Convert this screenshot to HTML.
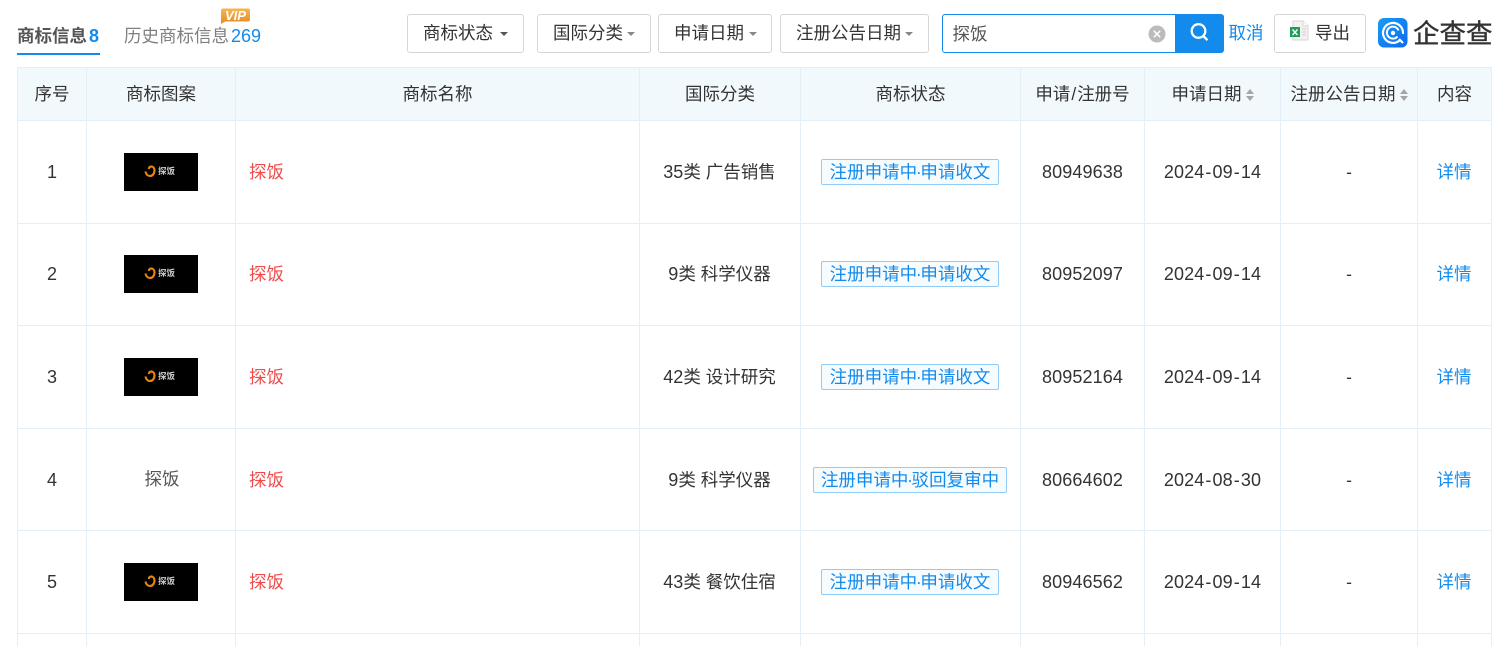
<!DOCTYPE html>
<html lang="zh-CN"><head><meta charset="utf-8"><title>商标信息</title>
<style>
*{box-sizing:border-box}
html,body{margin:0;padding:0;width:1512px;height:646px;overflow:hidden;background:#fff}
body{position:relative;font-family:"Liberation Sans","Noto Sans CJK SC",sans-serif;font-size:17.5px;color:#333}
.a{position:absolute;white-space:nowrap}
.tab{top:23px;line-height:26px;height:26px}
.btn{position:absolute;top:14px;height:39px;border:1px solid #d6d6d6;border-radius:3px;background:#fff;line-height:37px;padding-left:15px;white-space:nowrap}
.caret{position:absolute;top:17px;width:0;height:0;border-left:4px solid transparent;border-right:4px solid transparent;border-top:4px solid #555}
.caret.g{border-top-color:#888}
table{position:absolute;left:17px;top:67px;width:1475px;table-layout:fixed;border-collapse:separate;border-spacing:0}
td,th{padding:0;text-align:center;font-weight:400;line-height:24px;border-right:1px solid #e4eef6;border-bottom:1px solid #e4eef6;vertical-align:middle;white-space:nowrap;overflow:hidden}
tr td:first-child,tr th:first-child{border-left:1px solid #e4eef6}
th{background:#f2f9fc;height:54px;border-top:1px solid #e4eef6}
td.c{padding-right:1px}
.r2 td{padding-bottom:2px}
.name{text-align:left;padding-left:13px;color:#f04b4b}
.tag{display:inline-block;height:26px;line-height:24px;padding:0 7.300px;border:1px solid #91cbf7;border-radius:2px;background:#f6fbfe;color:#128bed}
.dot{margin:0 -1.300px}
.num,.d{font-size:18px;letter-spacing:.1px}
.h{margin:0 1px}
.link{color:#128bed}
.logo{display:block;margin:0 auto}
.sort{display:inline-block;position:relative;width:8px;height:12px;margin-left:4px;vertical-align:-1px}
.sort:before,.sort:after{content:"";position:absolute;left:0;border-left:4px solid transparent;border-right:4px solid transparent}
.sort:before{top:0;border-bottom:5px solid #a5a5a5}
.sort:after{bottom:0;border-top:5px solid #a5a5a5}
</style></head><body>

<div class="a tab" style="left:17px;font-weight:700;color:#555">商标信息<span style="color:#128bed;font-size:18px;margin-left:2px">8</span></div>
<div class="a" style="left:17px;top:53px;width:83px;height:2px;background:#128bed"></div>
<div class="a tab" style="left:124px;color:#808080">历史商标信息<span style="color:#128bed;font-size:18px;margin-left:2px">269</span></div>
<svg class="a" style="left:220px;top:7px" width="31" height="18" viewBox="0 0 31 18">
<defs><linearGradient id="v" x1="0" y1="0" x2="0" y2="1"><stop offset="0" stop-color="#f7b555"/><stop offset="1" stop-color="#e48c22"/></linearGradient></defs>
<path d="M3 1.500h25a2 2 0 0 1 2 2v9a2 2 0 0 1-2 2H5l-4 2.500V3.500a2 2 0 0 1 2-2z" fill="url(#v)"/>
<text x="15.500" y="12.800" text-anchor="middle" font-family="Liberation Sans" font-size="13" font-weight="700" font-style="italic" fill="#fff">VIP</text></svg>

<div class="btn" style="left:407px;width:117px">商标状态<span class="caret" style="left:92px"></span></div>
<div class="btn" style="left:537px;width:114px">国际分类<span class="caret g" style="left:89px"></span></div>
<div class="btn" style="left:658px;width:114px">申请日期<span class="caret g" style="left:90px"></span></div>
<div class="btn" style="left:780px;width:149px">注册公告日期<span class="caret g" style="left:124px"></span></div>

<div class="a" style="left:942px;top:14px;width:234px;height:39px;border:1px solid #128bed;border-radius:3px 0 0 3px;background:#fff;line-height:38px;padding-left:9.500px;color:#555">探饭</div>
<svg class="a" style="left:1148px;top:25px" width="18" height="18" viewBox="0 0 18 18"><circle cx="9" cy="9" r="8.500" fill="#bbb"/><path d="M5.800 5.800l6.400 6.400M12.200 5.800l-6.400 6.400" stroke="#fff" stroke-width="1.500"/></svg>
<div class="a" style="left:1175px;top:14px;width:49px;height:39px;background:#128bed;border-radius:0 3px 3px 0"></div>
<svg class="a" style="left:1189px;top:22px" width="21" height="21" viewBox="0 0 21 21"><circle cx="9.500" cy="9" r="6.800" fill="none" stroke="#fff" stroke-width="2.300"/><path d="M14.300 14l4.200 4.200" stroke="#fff" stroke-width="2.300"/></svg>
<div class="a link" style="left:1228.500px;top:20px;line-height:26px">取消</div>

<div class="btn" style="left:1274px;width:92px;padding-left:40px">导出</div>
<svg class="a" style="left:1289px;top:20px" width="20" height="22" viewBox="0 0 20 22">
<path d="M4 1h10l5 5v14H4z" fill="#f2f2f2" stroke="#d5d5d5"/><path d="M14 1v5h5" fill="#fff" stroke="#d5d5d5"/>
<path d="M13 9h4M13 12h4M13 15h4" stroke="#ccc"/>
<rect x="1" y="7" width="10" height="10" fill="#1d9f5b"/>
<path d="M3.500 9.500l5 5.500M8.500 9.500l-5 5.500" stroke="#fff" stroke-width="1.400"/></svg>

<svg class="a" style="left:1378px;top:18px" width="30" height="30" viewBox="0 0 30 30">
<defs><linearGradient id="g" x1="0" y1="0" x2="1" y2="1"><stop offset="0" stop-color="#1a9bf5"/><stop offset="1" stop-color="#0a6cf0"/></linearGradient></defs>
<rect width="29.500" height="29.500" rx="6" fill="url(#g)"/>
<path d="M21.500 22.500A10 10 0 1 1 25 15" fill="none" stroke="#fff" stroke-width="2.200" stroke-linecap="round"/>
<path d="M19.500 18.500A6 6 0 1 1 20.500 12.500" fill="none" stroke="#fff" stroke-width="2"/>
<circle cx="15" cy="15" r="2.200" fill="#fff"/><path d="M21 21l4 4" stroke="#fff" stroke-width="2.200"/></svg>
<div class="a" style="left:1413px;top:16px;font-size:26.500px;line-height:36px;color:#333;-webkit-text-stroke:.4px #333">企查查</div>

<table>
<colgroup><col style="width:70px"><col style="width:149px"><col style="width:404px"><col style="width:161px"><col style="width:220px"><col style="width:124px"><col style="width:136px"><col style="width:137px"><col style="width:74px"></colgroup>
<tr><th>序号</th><th>商标图案</th><th>商标名称</th><th>国际分类</th><th>商标状态</th><th>申请<span style="margin:0 1px">/</span>注册号</th><th>申请日期<span class="sort"></span></th><th>注册公告日期<span class="sort"></span></th><th>内容</th></tr>

<tr style="height:103px"><td class="d">1</td><td><svg class="logo" width="74" height="38" viewBox="0 0 74 38"><rect width="74" height="38"/><path d="M21.500 18.500c.5 3 2.500 4.500 4.500 4.500c3 0 4.500-3 4.500-5.500c0-2.500-1.500-4-3.200-4c-1.500 0-2.500 1-2.300 2.500" fill="none" stroke="#e8830c" stroke-width="2.200"/><text x="34" y="21" font-size="8.500" font-weight="700" fill="#ccc" font-family="Noto Sans CJK SC">探饭</text></svg></td><td class="name">探饭</td><td class="c"><span class="d">35</span>类 广告销售</td><td class="c"><span class="tag">注册申请中<span class="dot">·</span>申请收文</span></td><td class="num">80949638</td><td class="num">2024<span class="h">-</span>09<span class="h">-</span>14</td><td>-</td><td class="link c">详情</td></tr>

<tr class="r2" style="height:102px"><td class="d">2</td><td><svg class="logo" width="74" height="38" viewBox="0 0 74 38"><rect width="74" height="38"/><path d="M21.500 18.500c.5 3 2.500 4.500 4.500 4.500c3 0 4.500-3 4.500-5.500c0-2.500-1.500-4-3.200-4c-1.500 0-2.500 1-2.300 2.500" fill="none" stroke="#e8830c" stroke-width="2.200"/><text x="34" y="21" font-size="8.500" font-weight="700" fill="#ccc" font-family="Noto Sans CJK SC">探饭</text></svg></td><td class="name">探饭</td><td class="c"><span class="d">9</span>类 科学仪器</td><td class="c"><span class="tag">注册申请中<span class="dot">·</span>申请收文</span></td><td class="num">80952097</td><td class="num">2024<span class="h">-</span>09<span class="h">-</span>14</td><td>-</td><td class="link c">详情</td></tr>

<tr style="height:103px"><td class="d">3</td><td><svg class="logo" width="74" height="38" viewBox="0 0 74 38"><rect width="74" height="38"/><path d="M21.500 18.500c.5 3 2.500 4.500 4.500 4.500c3 0 4.500-3 4.500-5.500c0-2.500-1.500-4-3.200-4c-1.500 0-2.500 1-2.300 2.500" fill="none" stroke="#e8830c" stroke-width="2.200"/><text x="34" y="21" font-size="8.500" font-weight="700" fill="#ccc" font-family="Noto Sans CJK SC">探饭</text></svg></td><td class="name">探饭</td><td class="c"><span class="d">42</span>类 设计研究</td><td class="c"><span class="tag">注册申请中<span class="dot">·</span>申请收文</span></td><td class="num">80952164</td><td class="num">2024<span class="h">-</span>09<span class="h">-</span>14</td><td>-</td><td class="link c">详情</td></tr>

<tr style="height:102px"><td class="d">4</td><td style="color:#555;padding-bottom:2px"><span style="position:relative;left:1px">探饭</span></td><td class="name">探饭</td><td class="c"><span class="d">9</span>类 科学仪器</td><td class="c"><span class="tag">注册申请中<span class="dot">·</span>驳回复审中</span></td><td class="num">80664602</td><td class="num">2024<span class="h">-</span>08<span class="h">-</span>30</td><td>-</td><td class="link c">详情</td></tr>

<tr style="height:103px"><td class="d">5</td><td><svg class="logo" width="74" height="38" viewBox="0 0 74 38"><rect width="74" height="38"/><path d="M21.500 18.500c.5 3 2.500 4.500 4.500 4.500c3 0 4.500-3 4.500-5.500c0-2.500-1.500-4-3.200-4c-1.500 0-2.500 1-2.300 2.500" fill="none" stroke="#e8830c" stroke-width="2.200"/><text x="34" y="21" font-size="8.500" font-weight="700" fill="#ccc" font-family="Noto Sans CJK SC">探饭</text></svg></td><td class="name">探饭</td><td class="c"><span class="d">43</span>类 餐饮住宿</td><td class="c"><span class="tag">注册申请中<span class="dot">·</span>申请收文</span></td><td class="num">80946562</td><td class="num">2024<span class="h">-</span>09<span class="h">-</span>14</td><td>-</td><td class="link c">详情</td></tr>

<tr style="height:12px"><td style="border-bottom:0;line-height:0"></td><td style="border-bottom:0;line-height:0"></td><td style="border-bottom:0;line-height:0"></td><td style="border-bottom:0;line-height:0"></td><td style="border-bottom:0;line-height:0"></td><td style="border-bottom:0;line-height:0"></td><td style="border-bottom:0;line-height:0"></td><td style="border-bottom:0;line-height:0"></td><td style="border-bottom:0;line-height:0"></td></tr>
</table>
</body></html>
